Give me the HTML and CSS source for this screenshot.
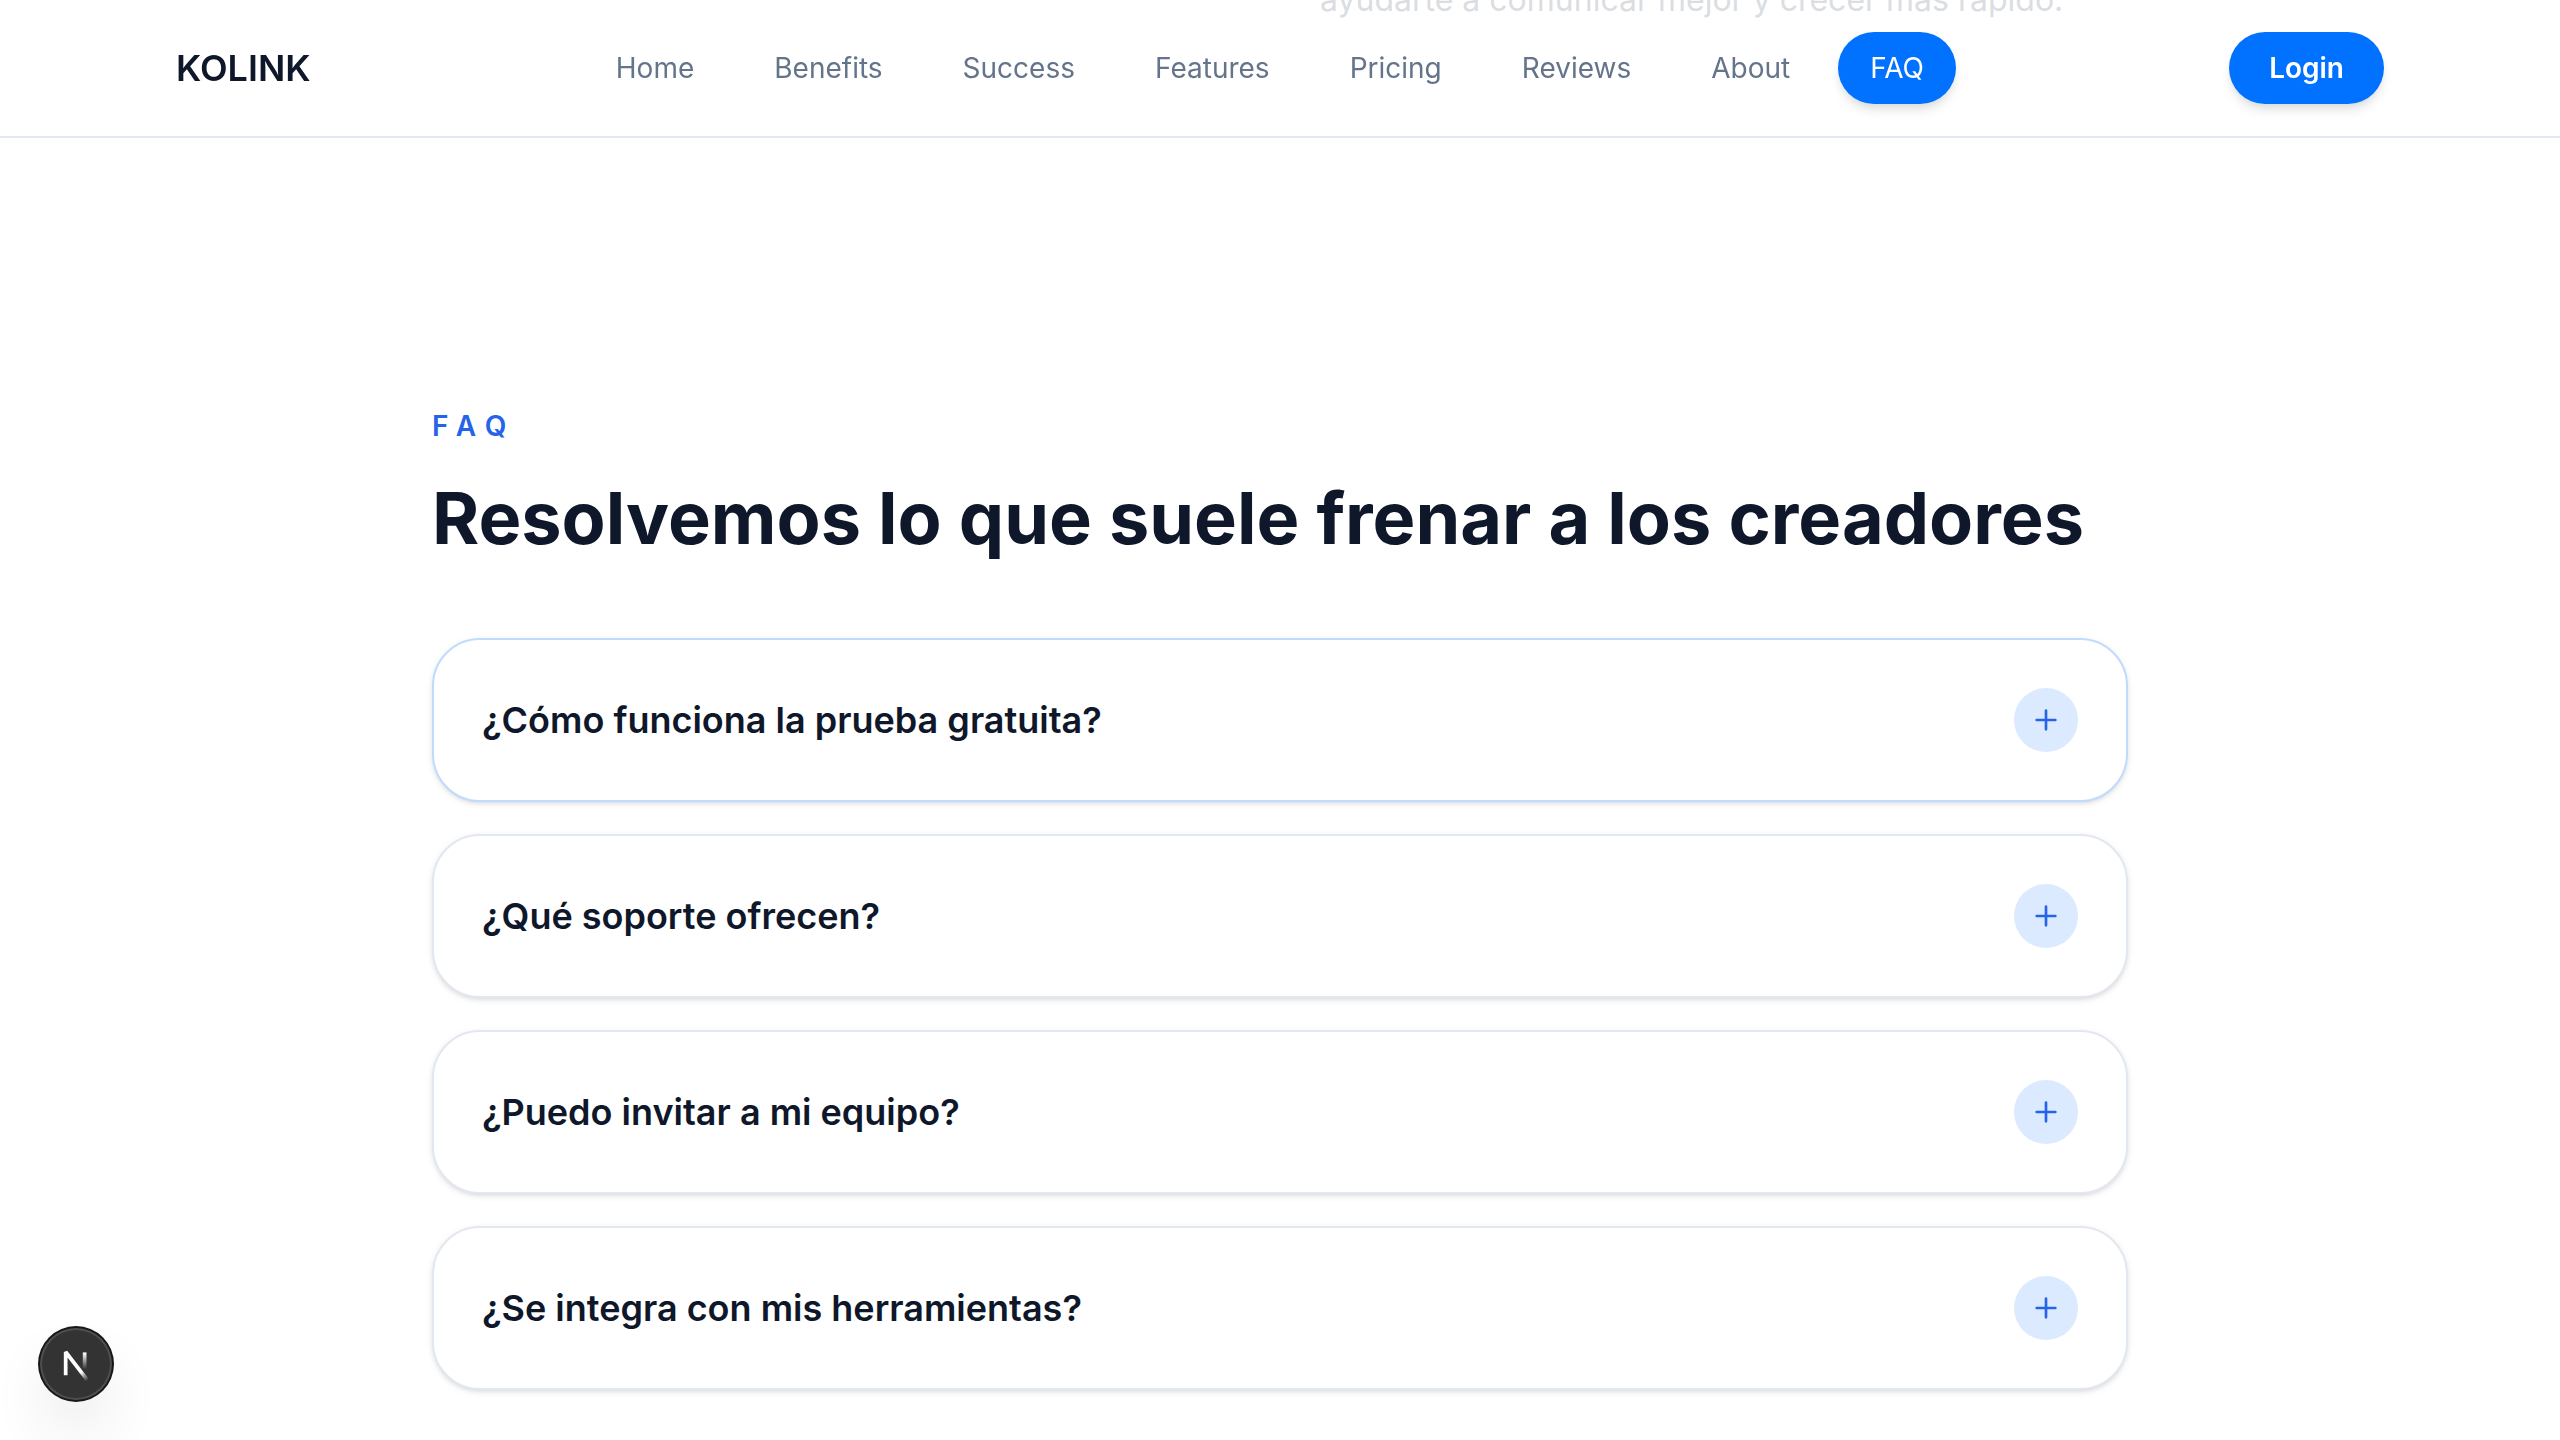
FILE: index.html
```html
<!DOCTYPE html>
<html lang="es">
<head>
<meta charset="utf-8">
<meta name="viewport" content="width=device-width, initial-scale=1">
<title>KOLINK</title>
<link rel="stylesheet" href="styles.css">
</head>
<body>
<header class="site-header">
  <div class="header-inner">
    <a class="logo" href="#home">KOLINK</a>
    <nav class="nav" aria-label="Principal">
      <a class="nav-link" href="#home">Home</a>
      <a class="nav-link" href="#benefits">Benefits</a>
      <a class="nav-link" href="#success">Success</a>
      <a class="nav-link" href="#features">Features</a>
      <a class="nav-link" href="#pricing">Pricing</a>
      <a class="nav-link" href="#reviews">Reviews</a>
      <a class="nav-link" href="#about">About</a>
      <a class="nav-link nav-link-active" href="#faq" aria-current="true">FAQ</a>
    </nav>
    <button class="login" type="button">Login</button>
  </div>
</header>
<main>
  <section class="about" id="about">
    <p class="about-text">ayudarte a comunicar mejor y crecer más rápido.</p>
  </section>
  <section class="faq" id="faq">
    <p class="eyebrow">FAQ</p>
    <h2 class="title">Resolvemos lo que suele frenar a los creadores</h2>
    <div class="faq-list">
      <button class="faq-item faq-item-active" type="button" aria-expanded="false">
        <span>¿Cómo funciona la prueba gratuita?</span>
        <span class="plus"><svg viewBox="0 0 24 24" aria-hidden="true"><path d="M5 12h14M12 5v14"/></svg></span>
      </button>
      <button class="faq-item" type="button" aria-expanded="false">
        <span>¿Qué soporte ofrecen?</span>
        <span class="plus"><svg viewBox="0 0 24 24" aria-hidden="true"><path d="M5 12h14M12 5v14"/></svg></span>
      </button>
      <button class="faq-item" type="button" aria-expanded="false">
        <span>¿Puedo invitar a mi equipo?</span>
        <span class="plus"><svg viewBox="0 0 24 24" aria-hidden="true"><path d="M5 12h14M12 5v14"/></svg></span>
      </button>
      <button class="faq-item" type="button" aria-expanded="false">
        <span>¿Se integra con mis herramientas?</span>
        <span class="plus"><svg viewBox="0 0 24 24" aria-hidden="true"><path d="M5 12h14M12 5v14"/></svg></span>
      </button>
    </div>
  </section>
</main>
<button class="dev-badge" type="button" aria-label="Next.js Dev Tools">
  <svg viewBox="0.5 0 14 14" fill="none" aria-hidden="true">
    <defs>
      <linearGradient id="fade-diagonal" gradientUnits="userSpaceOnUse" x1="9.96" y1="11.12" x2="15.48" y2="17.97">
        <stop stop-color="#fff"/>
        <stop offset=".604" stop-color="#fff" stop-opacity="0"/>
      </linearGradient>
      <linearGradient id="fade-bar" gradientUnits="userSpaceOnUse" x1="11.82" y1="1.4" x2="11.79" y2="9.63">
        <stop stop-color="#fff"/>
        <stop offset="1" stop-color="#fff" stop-opacity="0"/>
      </linearGradient>
    </defs>
    <path d="M13.3 15.2 2.34 1v11.6" stroke="url(#fade-diagonal)" stroke-width="1.86" stroke-linejoin="bevel"/>
    <rect x="10.9" y="1.2" width="1.86" height="11.6" fill="url(#fade-bar)"/>
  </svg>
</button>
</body>
</html>
```

FILE: styles.css
```css
* {
  box-sizing: border-box;
}

body {
  margin: 0;
  background: #fff;
  color: #0f172a;
  font-family: Inter, "Liberation Sans", sans-serif;
  font-size: 32px;
}

button {
  border: 0;
  font-family: inherit;
  color: inherit;
  cursor: pointer;
}

a {
  color: inherit;
  text-decoration: none;
}

.site-header {
  position: fixed;
  z-index: 10;
  top: 0;
  left: 0;
  right: 0;
  background: rgba(255, 255, 255, 0.8);
  border-bottom: 2px solid #e2e8f0;
}

.header-inner {
  display: flex;
  align-items: center;
  justify-content: space-between;
  max-width: 2304px;
  margin: 0 auto;
  padding: 32px 48px;
}

.logo {
  font-size: 36px;
  line-height: 56px;
  font-weight: 600;
}

.nav {
  display: flex;
  gap: 16px;
}

.nav-link {
  padding: 16px 32px;
  border-radius: 36px;
  font-size: 28px;
  line-height: 40px;
  color: #64748b;
}

.nav-link-active {
  background: #0072ff;
  color: #fff;
  box-shadow: 0 8px 12px -2px rgba(0, 0, 0, 0.1), 0 4px 8px -4px rgba(0, 0, 0, 0.1);
}

.login {
  padding: 16px 40px;
  border-radius: 36px;
  background: #0072ff;
  color: #fff;
  font-size: 28px;
  line-height: 40px;
  font-weight: 600;
  box-shadow: 0 8px 12px -2px rgba(0, 0, 0, 0.1), 0 4px 8px -4px rgba(0, 0, 0, 0.1);
}

/* The tail of the previous section runs under the translucent header. */
.about {
  display: grid;
  grid-template-columns: 1fr 1fr;
  column-gap: 80px;
  max-width: 2304px;
  height: 32px;
  margin: 0 auto;
  padding: 0 48px;
}

.about-text {
  grid-column: 2;
  margin: -28px 0 0;
  font-size: 32px;
  line-height: 56px;
  color: #475569;
}

.faq {
  max-width: 1792px;
  margin: 0 auto;
  padding: 374px 48px 48px;
}

.eyebrow {
  margin: 0;
  font-size: 28px;
  line-height: 40px;
  font-weight: 600;
  letter-spacing: 0.35em;
  color: #2563eb;
}

.title {
  margin: 32px 0 80px;
  font-size: 72px;
  line-height: 80px;
  font-weight: 700;
}

.faq-list {
  display: grid;
  gap: 32px;
}

.faq-item {
  display: flex;
  align-items: center;
  justify-content: space-between;
  gap: 32px;
  padding: 48px;
  border: 2px solid #e2e8f0;
  border-radius: 48px;
  background: #fff;
  font-size: 36px;
  line-height: 56px;
  font-weight: 600;
  text-align: left;
  box-shadow: 0 2px 6px rgba(0, 0, 0, 0.1), 0 2px 4px -2px rgba(0, 0, 0, 0.1);
}

.faq-item-active {
  border-color: #bfdbfe;
}

.plus {
  display: grid;
  place-items: center;
  width: 64px;
  height: 64px;
  border-radius: 50%;
  background: #dbeafe;
}

.plus svg {
  width: 32px;
  height: 32px;
  fill: none;
  stroke: #2563eb;
  stroke-width: 2;
  stroke-linecap: round;
}

.dev-badge {
  position: fixed;
  left: 40px;
  bottom: 40px;
  display: grid;
  place-items: center;
  width: 72px;
  height: 72px;
  padding: 0;
  border-radius: 50%;
  background: #333;
  box-shadow: 0 0 0 2px #171717, inset 0 0 0 2px rgba(255, 255, 255, 0.14), 0 32px 64px -16px rgba(0, 0, 0, 0.24);
}

.dev-badge svg {
  width: 28px;
  height: 28px;
  overflow: visible;
}
```
